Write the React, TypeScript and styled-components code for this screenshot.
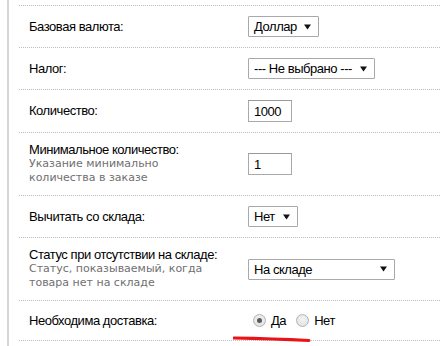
import React from 'react';

import { createGlobalStyle, styled } from 'styled-components';

const GlobalStyle = createGlobalStyle`
  html, body {
    margin: 0;
    padding: 0;
    background: #ffffff;
  }
  body {
    font-family: "Liberation Sans", Arial, sans-serif;
    font-size: 13px;
    letter-spacing: -0.45px;
    color: #000;
  }
`;

const Page = styled.div`
  position: relative;
  min-height: 100vh;
  overflow: hidden;
  margin-left: 7px;
  padding: 5px 0 0 10px;
  border-left: 2px solid #d6d6d6;
  box-sizing: border-box;
`;

const Form = styled.div`
  display: flex;
  flex-direction: column;
  border-top: 1px dotted #bdbdbd;
`;

const Row = styled.div`
  display: grid;
  grid-template-columns: 229px 1fr;
  align-items: center;
  padding: 10px 0;
  border-bottom: 1px dotted #bdbdbd;
`;

const Label = styled.div`
  padding: 0 30px 0 10px;
  line-height: 14px;
`;

const Help = styled.div`
  font-family: "DejaVu Sans", Verdana, sans-serif;
  font-size: 11px;
  line-height: 14px;
  letter-spacing: 0;
  color: #6f6f6f;
`;

const Field = styled.div`
  display: flex;
  align-items: center;
`;

const SelectBox = styled.div<{ $width: number }>`
  display: inline-flex;
  align-items: center;
  justify-content: space-between;
  box-sizing: border-box;
  width: ${(p) => p.$width}px;
  height: 21px;
  padding: 0 7px 0 5px;
  border: 1px solid #a9a9a9;
  border-radius: 1px;
  background: #fff;
  font-size: 13px;
  white-space: nowrap;
`;

const TextInput = styled.input`
  box-sizing: border-box;
  width: 44px;
  height: 22px;
  padding: 0 5px;
  border: 1px solid #a9a9a9;
  border-top-color: #999;
  font-family: "Liberation Sans", Arial, sans-serif;
  font-size: 13px;
  letter-spacing: -0.45px;
  color: #000;
  outline: none;
`;

const RadioGroup = styled.div`
  display: flex;
  align-items: center;
  height: 19px;
  padding-left: 5px;
`;

const RadioOption = styled.label`
  display: inline-flex;
  align-items: center;
  gap: 5px;
  margin-right: 10px;
`;

const RadioDot = styled.span<{ $checked?: boolean }>`
  position: relative;
  display: inline-block;
  width: 13px;
  height: 13px;
  box-sizing: border-box;
  border-radius: 50%;
  border: 1px solid #b4b4b4;
  background: radial-gradient(circle at 50% 40%, #f4f4f4 0%, #dcdcdc 100%);

  &::after {
    content: '';
    display: ${(p) => (p.$checked ? 'block' : 'none')};
    position: absolute;
    left: 3px;
    top: 3px;
    width: 5px;
    height: 5px;
    border-radius: 50%;
    background: #5a5a5a;
  }
`;

// hand-drawn red mark under the delivery radios
const Underline = styled.svg`
  position: absolute;
  left: 224px;
  top: 335px;
`;

const Caret = () => (
  <svg width="7" height="6" viewBox="0 0 7 6">
    <polygon points="0,0.5 7,0.5 3.5,5.5" fill="#111" />
  </svg>
);

const Select = ({ value, width }: { value: string; width: number }) => (
  <SelectBox $width={width}>
    <span>{value}</span>
    <Caret />
  </SelectBox>
);

export default function App() {
  return (
    <>
      <GlobalStyle />
      <Page>
        <Form>
          <Row>
            <Label>Базовая валюта:</Label>
            <Field>
              <Select value="Доллар" width={71} />
            </Field>
          </Row>
          <Row>
            <Label>Налог:</Label>
            <Field>
              <Select value="--- Не выбрано ---" width={127} />
            </Field>
          </Row>
          <Row>
            <Label>Количество:</Label>
            <Field>
              <TextInput defaultValue="1000" />
            </Field>
          </Row>
          <Row>
            <Label>
              Минимальное количество:
              <Help>Указание минимально количества в заказе</Help>
            </Label>
            <Field>
              <TextInput defaultValue="1" />
            </Field>
          </Row>
          <Row>
            <Label>Вычитать со склада:</Label>
            <Field>
              <Select value="Нет" width={50} />
            </Field>
          </Row>
          <Row>
            <Label>
              Статус при отсутствии на складе:
              <Help>Статус, показываемый, когда товара нет на складе</Help>
            </Label>
            <Field>
              <Select value="На складе" width={147} />
            </Field>
          </Row>
          <Row>
            <Label>Необходима доставка:</Label>
            <RadioGroup>
              <RadioOption>
                <RadioDot $checked />
                Да
              </RadioOption>
              <RadioOption>
                <RadioDot />
                Нет
              </RadioOption>
            </RadioGroup>
          </Row>
        </Form>
        <Underline width="80" height="8" viewBox="0 0 80 8">
          <path d="M1 3 Q 40 3.5 76 5.5" stroke="#e8141a" strokeWidth="3" fill="none" strokeLinecap="round" />
        </Underline>
      </Page>
    </>
  );
}
